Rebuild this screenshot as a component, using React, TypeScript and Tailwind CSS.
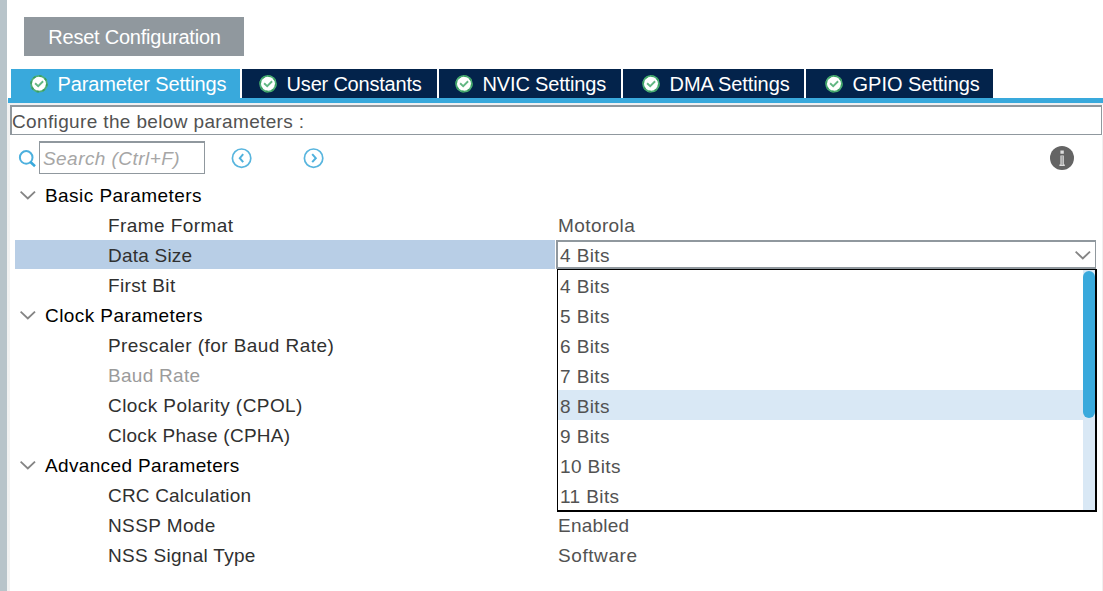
import React from "react";

function CheckBadge() {
  return (
    <svg viewBox="0 0 18 18" className="h-[18px] w-[18px] shrink-0">
      <circle cx="9" cy="8.8" r="7.9" fill="#fff" stroke="#4fb078" strokeWidth="1.8" />
      <circle cx="9" cy="8.8" r="7.9" fill="none" stroke="#3a9d61" strokeWidth="1.8" strokeDasharray="2.4 3.8" />
      <path d="M5.1 8.2 8.2 11.1 13.1 6.3" fill="none" stroke="#62b783" strokeWidth="1.9" />
    </svg>
  );
}

function Chevron() {
  return (
    <svg viewBox="0 0 16 10" className="h-[10px] w-[16px] shrink-0">
      <path d="M0.6 1.6 7.8 8.4 15 1.6" fill="none" stroke="#858585" strokeWidth="1.9" />
    </svg>
  );
}

function StepIcon({ d }: { d: string }) {
  return (
    <svg viewBox="0 0 22 22" className="h-[22px] w-[22px] shrink-0">
      <circle cx="10.6" cy="11.2" r="9.2" fill="none" stroke="#58b5de" strokeWidth="1.7" />
      <path d={d} fill="none" stroke="#4fb1dd" strokeWidth="2" />
    </svg>
  );
}

const tabs = [
  { label: "Parameter Settings", box: "w-[229px] bg-[#39a9dc] pl-[19px]", text: "tracking-[-0.13px]" },
  { label: "User Constants", box: "w-[195px] bg-[#03234b] pl-[17px]", text: "tracking-[-0.2px]" },
  { label: "NVIC Settings", box: "w-[182px] bg-[#03234b] pl-[16px]", text: "tracking-[-0.17px]" },
  { label: "DMA Settings", box: "w-[181px] bg-[#03234b] pl-[19px]", text: "tracking-[-0.1px]" },
  { label: "GPIO Settings", box: "w-[187px] bg-[#03234b] pl-[19px]", text: "tracking-[-0.05px]" },
];

type Row = { label: string; track: string; group?: boolean; selected?: boolean; muted?: boolean; value?: string; valueTrack?: string };

const rows: Row[] = [
  { label: "Basic Parameters", track: "tracking-[0.44px]", group: true },
  { label: "Frame Format", track: "tracking-[0.43px]", value: "Motorola", valueTrack: "tracking-[0.41px]" },
  { label: "Data Size", track: "tracking-[0.22px]", selected: true },
  { label: "First Bit", track: "tracking-[0.35px]" },
  { label: "Clock Parameters", track: "tracking-[0.43px]", group: true },
  { label: "Prescaler (for Baud Rate)", track: "tracking-[0.43px]" },
  { label: "Baud Rate", track: "tracking-[0.28px]", muted: true },
  { label: "Clock Polarity (CPOL)", track: "tracking-[0.43px]" },
  { label: "Clock Phase (CPHA)", track: "tracking-[0.28px]" },
  { label: "Advanced Parameters", track: "tracking-[0.35px]", group: true },
  { label: "CRC Calculation", track: "tracking-[0.19px]" },
  { label: "NSSP Mode", track: "tracking-[0.4px]", value: "Enabled", valueTrack: "tracking-[0.22px]" },
  { label: "NSS Signal Type", track: "tracking-[0.29px]", value: "Software", valueTrack: "tracking-[0.58px]" },
];

const sizes = ["4 Bits", "5 Bits", "6 Bits", "7 Bits", "8 Bits", "9 Bits", "10 Bits", "11 Bits"];

function SizeSelect() {
  return (
    <div className="relative ml-px h-[29px] w-[540px] border-2 border-r border-[#90989e] bg-white">
      <div className="flex h-full items-center justify-between pr-[4px] pl-[2px]">
        <span className="relative top-px tracking-[0.4px] text-[#525252]">4 Bits</span>
        <Chevron />
      </div>
      <div className="absolute top-[27px] -left-px z-10 flex h-[243px] w-[540px] border border-r-2 border-b-2 border-black bg-white">
        <ul className="h-[240px] w-[525px] overflow-hidden">
          {sizes.map((s) => (
            <li
              key={s}
              className={`flex h-[30px] items-center pl-[2px] tracking-[0.4px] text-[#525252] ${s === "8 Bits" ? "bg-[#d9e8f5]" : ""}`}
            >
              <span className="relative top-[2px]">{s}</span>
            </li>
          ))}
        </ul>
        <div className="h-full w-[12px] bg-[#d9e8f5]">
          <div className="h-[148px] w-full border-t border-[#d9e8f5]">
            <div className="h-[147px] w-full rounded-full bg-[#39a9dc]" />
          </div>
        </div>
      </div>
    </div>
  );
}

export default function App() {
  return (
    <div className="flex h-[591px] w-[1103px] overflow-hidden bg-white font-['Liberation_Sans',Arial,sans-serif] text-[19px] leading-[24px]">
      <div className="w-[7px] shrink-0 bg-[#b8c4ca]" />
      <div className="w-[3px] shrink-0 bg-linear-to-b from-white from-[17%] to-[#f2f2f2] to-[17%]" />
      <main className="flex w-[1093px] shrink-0 flex-col">
        <button className="mt-[17px] ml-[14px] flex h-[39px] w-[220px] shrink-0 items-center justify-center bg-[#90989e] text-[20px] text-white">
          <span className="relative left-[0.5px] tracking-[-0.23px]">Reset Configuration</span>
        </button>
        <nav className="mt-[13px] flex h-[29px] shrink-0 gap-[2px] pl-px">
          {tabs.map((t) => (
            <div key={t.label} className={`flex shrink-0 items-center gap-[9.6px] text-[20px] whitespace-nowrap text-white ${t.box}`}>
              <CheckBadge />
              <span className={t.text}>{t.label}</span>
            </div>
          ))}
        </nav>
        <div className="-ml-[2px] h-[5px] w-[1095px] shrink-0 bg-[#39a9dc]" />
        <div className="h-[2px] shrink-0 bg-[#f0f0f2]" />
        <div className="flex h-[30px] w-[1092px] shrink-0 items-center border-t-2 border-r border-b border-l-2 border-[#90989e] text-[#525252]">
          <span className="relative top-px tracking-[0.36px]">Configure the below parameters :</span>
        </div>
        <div className="flex h-[45px] w-[1093px] shrink-0 items-start border-r border-[#f0f0f0]">
          <svg viewBox="0 0 18 18" className="mt-[15px] ml-[8px] h-[18px] w-[18px] shrink-0">
            <circle cx="8.2" cy="7.4" r="6.3" fill="none" stroke="#4cb0de" strokeWidth="2" />
            <path d="M12.2 11.8 17 16.2" stroke="#39a9dc" strokeWidth="2.6" />
          </svg>
          <div className="mt-[6px] ml-[3px] flex h-[33px] w-[166px] items-center border border-t-2 border-[#90989e] pl-[3px] text-[#a6a6a6] italic">
            <span className="relative top-px tracking-[0.44px]">Search (Ctrl+F)</span>
          </div>
          <div className="mt-[12px] ml-[26px] flex gap-[50px]">
            <StepIcon d="M12.2 7.2 8.8 11.2l3.4 4" />
            <StepIcon d="M9.2 7.2 12.8 11.2l-3.6 4" />
          </div>
          <svg viewBox="0 0 24 24" className="mt-[11px] mr-[28px] ml-auto h-[24px] w-[24px]">
            <circle cx="12" cy="12" r="12" fill="#646464" />
            <path d="M10.4 4.6h3.4v3.2h-3.4zM10.4 9.4h3.4v9h1v1.6H9.4v-1.6h1z" fill="#dedede" />
            <path d="M12.1 10v9" stroke="#858585" strokeWidth="1" />
          </svg>
        </div>
        <div className="flex w-[1093px] grow flex-col border-r border-[#f0f0f0]">
          {rows.map((r) => (
            <div key={r.label} className="flex h-[30px] shrink-0 items-start whitespace-nowrap">
              <div
                className={`ml-[5px] flex h-[29px] w-[540px] shrink-0 items-center ${
                  r.group ? "gap-[9px] pl-[5px] text-black" : "pl-[93px]"
                } ${r.selected ? "bg-[#b8cee6]" : ""} ${r.muted ? "text-[#9b9b9b]" : r.group ? "" : "text-[#303030]"}`}
              >
                {r.group && <Chevron />}
                <span className={`relative top-px ${r.track}`}>{r.label}</span>
              </div>
              {r.selected && <SizeSelect />}
              {r.value && (
                <div className={`flex h-[29px] items-center pl-[3px] text-[#525252] ${r.valueTrack}`}>
                  <span className="relative top-px">{r.value}</span>
                </div>
              )}
            </div>
          ))}
        </div>
      </main>
    </div>
  );
}
